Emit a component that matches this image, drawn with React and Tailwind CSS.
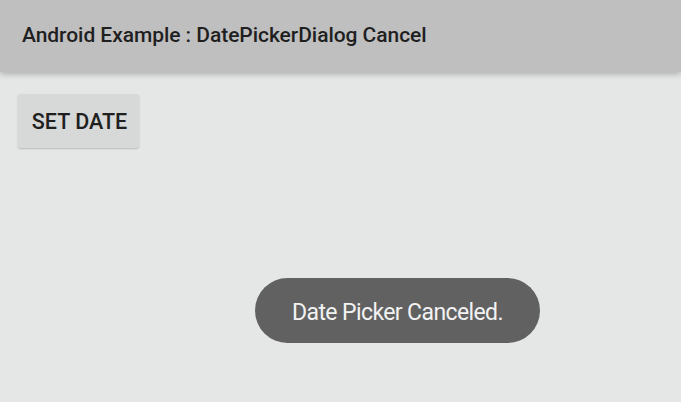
export default function App() {
  return (
    <div className="w-[681px] h-[402px] bg-[#e4e7e6] flex flex-col overflow-hidden font-['Roboto',sans-serif]">
      {/* Toolbar */}
      <div className="h-[72px] shrink-0 bg-[#bfbfbf] flex items-center pl-[22px] shadow-[0_2px_6px_rgba(0,0,0,0.25)] relative z-10">
        <span className="text-[21px] font-medium text-[#1f1f1f] tracking-[-0.05px]">
          Android Example : DatePickerDialog Cancel
        </span>
      </div>

      <div className="flex-1 flex flex-col pt-[22px] pl-[18px]">
        <button className="w-[121px] h-[54px] bg-[#d7d8d8] rounded-[3px] shadow-[0_1px_2px_rgba(0,0,0,0.2)] text-[21.5px] font-medium text-[#1f1f1f] flex items-center justify-center pt-[2px] pl-[2px]">
          SET DATE
        </button>

        <div className="mt-[130px] ml-[237px] w-[285px] h-[65px] rounded-full bg-[#616161] flex items-center justify-center pt-[6px]">
          <span className="text-[23px] text-[#f2f2f2] tracking-[-0.6px]">Date Picker Canceled.</span>
        </div>
      </div>
    </div>
  );
}
